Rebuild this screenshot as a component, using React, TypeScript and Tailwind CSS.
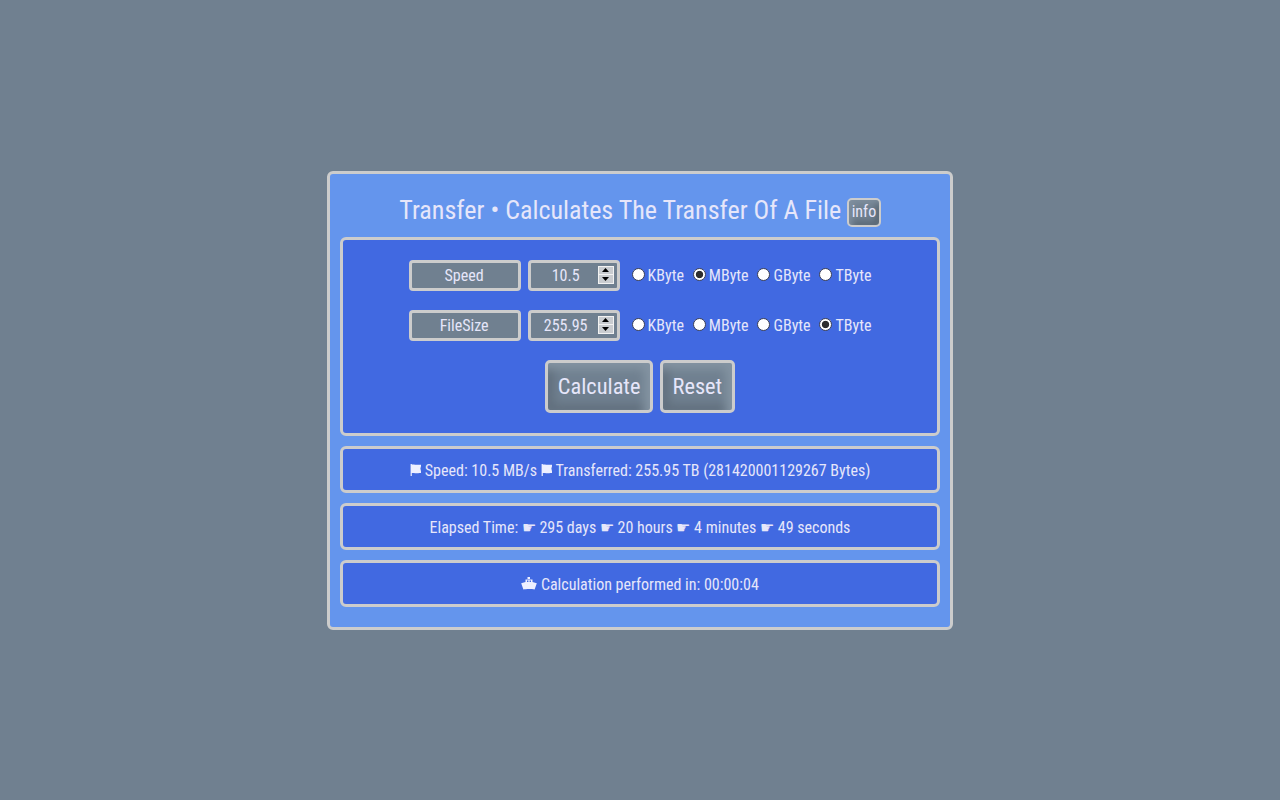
function Radio({ name, label, checked }: { name: string; label: string; checked?: boolean }) {
  return (
    <label className="inline-flex items-center">
      <input
        type="radio"
        name={name}
        defaultChecked={checked}
        className="relative top-[-1px] m-0 h-[13px] w-[13px] appearance-none rounded-full border border-[#3a3f55] bg-white checked:bg-[radial-gradient(circle,#2e2e2e_0,#2e2e2e_3.3px,#ffffff_4.1px)]"
      />
      <span className="ml-[3px] pt-[1px]">{label}</span>
    </label>
  );
}

function Spinner() {
  return (
    <span className="pointer-events-none absolute right-[6px] top-[6px] flex h-[18px] w-[16px] flex-col gap-[1px] border border-[#f2f2f2] bg-[#f2f2f2]">
      <span className="flex flex-1 items-center justify-center bg-[#c9ccd0]">
        <svg width="7" height="4" viewBox="0 0 7 4"><path d="M3.5 0 L7 4 L0 4 Z" fill="#000000" /></svg>
      </span>
      <span className="flex flex-1 items-center justify-center bg-[#c9ccd0]">
        <svg width="7" height="4" viewBox="0 0 7 4"><path d="M0 0 L7 0 L3.5 4 Z" fill="#000000" /></svg>
      </span>
    </span>
  );
}

function Row({ title, value, name, sel }: { title: string; value: string; name: string; sel: string }) {
  return (
    <div className="flex h-[31px] items-center justify-center">
      <div className="flex h-[31px] w-[112px] items-center justify-center rounded-[4px] border-[3px] border-[#cccccc] bg-[#708090] pr-[1px] pt-[1px]">{title}</div>
      <div className="relative ml-[7px] h-[31px] w-[92px]">
        <input
          type="number"
          defaultValue={value}
          step="any"
          className="h-full w-full rounded-[4px] border-[3px] border-[#cccccc] bg-[#708090] pr-[1px] text-center outline-none"
        />
        <Spinner />
      </div>
      <div className="ml-[12px] flex gap-[8.9px]">
        {["KByte", "MByte", "GByte", "TByte"].map((l) => (
          <Radio key={l} name={name} label={l} checked={l === sel} />
        ))}
      </div>
    </div>
  );
}

function Result({ children }: { children: React.ReactNode }) {
  return (
    <div className="mt-[10px] flex h-[47px] items-center justify-center rounded-[6px] border-[3px] border-[#cccccc] bg-[#4169e1] pt-[3px]">
      <span className="inline-flex items-center whitespace-pre">{children}</span>
    </div>
  );
}

function Flag() {
  return (
    <svg width="11.5" height="12" viewBox="0 0 11.5 12" className="relative top-[-1px]">
      <path d="M0.6 0 H1.8 V12 H0.6 Z M1.8 0.6 C4 0.2 6 1.2 11.4 0.6 L10.4 4.6 L11.4 9 C6 9.6 4 8.6 1.8 9 Z" fill="#eef0ff" />
    </svg>
  );
}

function Ship() {
  return (
    <svg width="16" height="13" viewBox="0 0 16 13" className="relative top-[-1px]">
      <path
        d="M6.5 0 H9 V2 H6.5 Z M4.5 2.5 H11.5 V5 L15.8 6.2 L13.6 12.6 C11 11.8 5 11.8 2.4 12.6 L0.2 6.2 L4.5 5 Z"
        fill="#eef0ff"
      />
      <path d="M6 3.6 H7.4 V5 H6 Z M8.6 3.6 H10 V5 H8.6 Z" fill="#4169e1" />
    </svg>
  );
}

const btn =
  "h-[53px] rounded-[5px] border-[3px] border-[#cccccc] bg-[#708090] px-[9.5px] pt-[1px] text-[22.4px] text-[#e6e6fa] shadow-[inset_-6px_6px_10px_#8494a2,inset_6px_-6px_10px_#62707e]";

export default function App() {
  return (
    <div className="flex h-[800px] items-center justify-center bg-[#708090] text-[16px] text-[#e6e6fa] [font-family:'Roboto_Condensed','Roboto',sans-serif] [font-stretch:75%]">
      <div className="h-[459px] w-[626px] rounded-[6px] border-[3px] border-[#cccccc] bg-[#6495ed] px-[10px]">
        <div className="flex h-[63px] items-center justify-center pb-[10px] pt-[24px]">
          <span className="mb-[3px] text-[26.06px]">Transfer • Calculates The Transfer Of A File</span>
          <button className="ml-[6px] h-[29px] rounded-[5px] border-[2.5px] border-[#cccccc] bg-[#708090] px-[2.5px] text-[16px] shadow-[inset_3px_3px_6px_#8090a0,inset_-3px_-3px_6px_#566470]">info</button>
        </div>
        <div className="flex h-[199px] flex-col items-center rounded-[6px] border-[3px] border-[#cccccc] bg-[#4169e1] pt-[20px]">
          <Row title="Speed" value="10.5" name="a" sel="MByte" />
          <div className="mt-[19px]">
            <Row title="FileSize" value="255.95" name="b" sel="TByte" />
          </div>
          <div className="mt-[19px] flex gap-[7px]">
            <button className={btn}>Calculate</button>
            <button className={btn}>Reset</button>
          </div>
        </div>
        <Result>
          <Flag /> Speed: 10.5 MB/s <Flag /> Transferred: 255.95 TB (281420001129267 Bytes)
        </Result>
        <Result>Elapsed Time: ☛ 295 days ☛ 20 hours ☛ 4 minutes ☛ 49 seconds</Result>
        <Result>
          <Ship /> Calculation performed in: 00:00:04
        </Result>
      </div>
    </div>
  );
}
